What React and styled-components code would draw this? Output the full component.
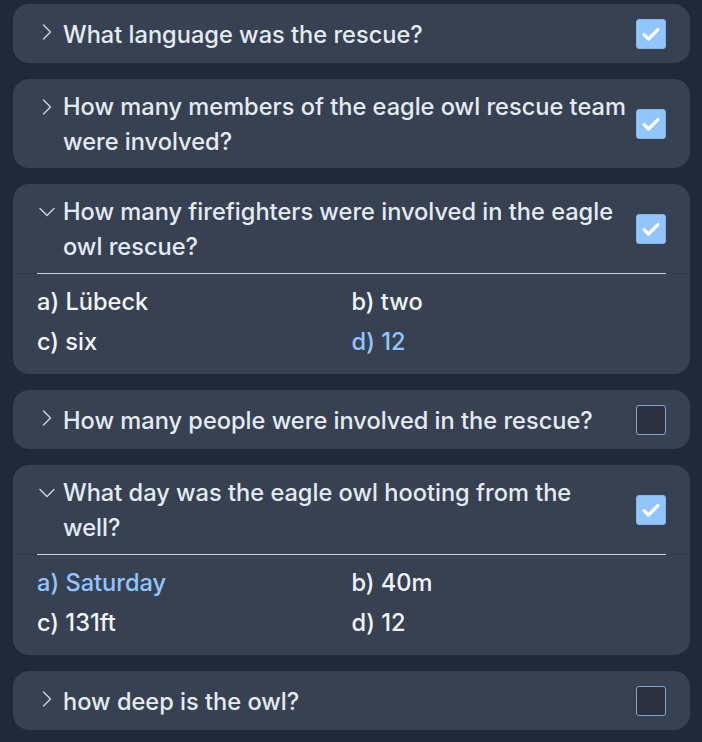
import React, { useState } from 'react';
import styled, { createGlobalStyle } from 'styled-components';

const GlobalStyle = createGlobalStyle`
    html, body {
        margin: 0;
        padding: 0;
        background: #1f2937;
    }
    body {
        font-family: Inter, "Noto Sans", "Liberation Sans", sans-serif;
    }
`

const questions = [
    {
        id: 1,
        text: 'What language was the rescue?',
        done: true,
        answers: ['German', 'English', 'French', 'Dutch'],
        picked: null,
    },
    {
        id: 2,
        text: 'How many members of the eagle owl rescue team were involved?',
        done: true,
        answers: ['one', 'two', 'three', 'four'],
        picked: null,
    },
    {
        id: 3,
        text: 'How many firefighters were involved in the eagle owl rescue?',
        done: true,
        open: true,
        answers: ['Lübeck', 'two', 'six', '12'],
        picked: 3,
    },
    {
        id: 4,
        text: 'How many people were involved in the rescue?',
        done: false,
        answers: ['two', 'six', 'ten', '12'],
        picked: null,
    },
    {
        id: 5,
        text: 'What day was the eagle owl hooting from the well?',
        done: true,
        open: true,
        answers: ['Saturday', '40m', '131ft', '12'],
        picked: 0,
    },
    {
        id: 6,
        text: 'how deep is the owl?',
        done: false,
        answers: ['10m', '40m', '131ft', '12'],
        picked: null,
    },
];

const LETTERS = ['a', 'b', 'c', 'd'];

export default function App() {
    const [open, setOpen] = useState(() => questions.filter(q => q.open).map(q => q.id));

    const toggle = (id) => {
        setOpen(open.includes(id) ? open.filter(o => o !== id) : [...open, id]);
    }

    return (
        <>
            <GlobalStyle />
            <List>
                {questions.map(q => {
                    const isOpen = open.includes(q.id);
                    return (
                        <Card key={q.id}>
                            <Header onClick={() => toggle(q.id)}>
                                <Chevron>
                                    <svg width="20" height="20" viewBox="0 0 20 20" fill="none" stroke="currentColor" strokeWidth="1.4" strokeLinecap="round" strokeLinejoin="round">
                                        {isOpen
                                            ? <polyline points="3,6.5 10,13.5 17,6.5" />
                                            : <polyline points="6.5,3 13.5,10 6.5,17" />}
                                    </svg>
                                </Chevron>
                                <Question>{q.text}</Question>
                                <Check checked={q.done}>
                                    {q.done &&
                                        <svg width="20" height="20" viewBox="0 0 16 16" fill="none" stroke="#fff" strokeWidth="2.6" strokeLinecap="round" strokeLinejoin="round">
                                            <polyline points="2.5,8.5 6,12 13.5,4.5" />
                                        </svg>}
                                </Check>
                            </Header>

                            {isOpen &&
                                <Panel>
                                    <Answers>
                                        {q.answers.map((a, i) => (
                                            <Answer key={i} picked={q.picked === i}>{LETTERS[i]}) {a}</Answer>
                                        ))}
                                    </Answers>
                                </Panel>}
                        </Card>
                    )
                })}
            </List>
        </>
    )
}

const List = styled.div`
    display: flex;
    flex-direction: column;
    gap: 16px;
    padding: 4px 12px 12px 13px;
`

const Card = styled.div`
    background: #374151;
    border-radius: 16px;
    overflow: hidden;
`

const Header = styled.div`
    display: flex;
    align-items: center;
    min-height: 59px;
    box-sizing: border-box;
    padding: 10px 24px 9px 24px;
    cursor: pointer;
`

const Chevron = styled.span`
    flex: none;
    align-self: flex-start;
    display: flex;
    align-items: center;
    justify-content: center;
    width: 20px;
    height: 35px;
    margin-right: 6px;
    color: #cbd5e1;
`

const Question = styled.div`
    flex: 1;
    min-width: 0;
    font-size: 23.6px;
    font-weight: 500;
    line-height: 35px;
    color: #e4ebf5;
`

const Check = styled.span`
    flex: none;
    width: 30px;
    height: 30px;
    box-sizing: border-box;
    margin-left: 10px;
    border-radius: 3px;
    display: flex;
    align-items: center;
    justify-content: center;
    background: ${p => p.checked ? '#93c5fd' : '#2b323e'};
    border: 1.5px solid ${p => p.checked ? '#86b6ea' : '#7fa6d8'};
`

const Panel = styled.div`
    border-top: 1px solid #303846;
    padding: 0 24px;
`

const Answers = styled.div`
    display: grid;
    grid-template-columns: 1fr 1fr;
    margin-top: -1px;
    padding: 8px 0 12px 0;
    border-top: 1px solid #cbd2dc;
`

const Answer = styled.div`
    font-size: 23.6px;
    font-weight: 500;
    line-height: 40px;
    color: ${p => p.picked ? '#93c5fd' : '#f1f5f9'};
`
